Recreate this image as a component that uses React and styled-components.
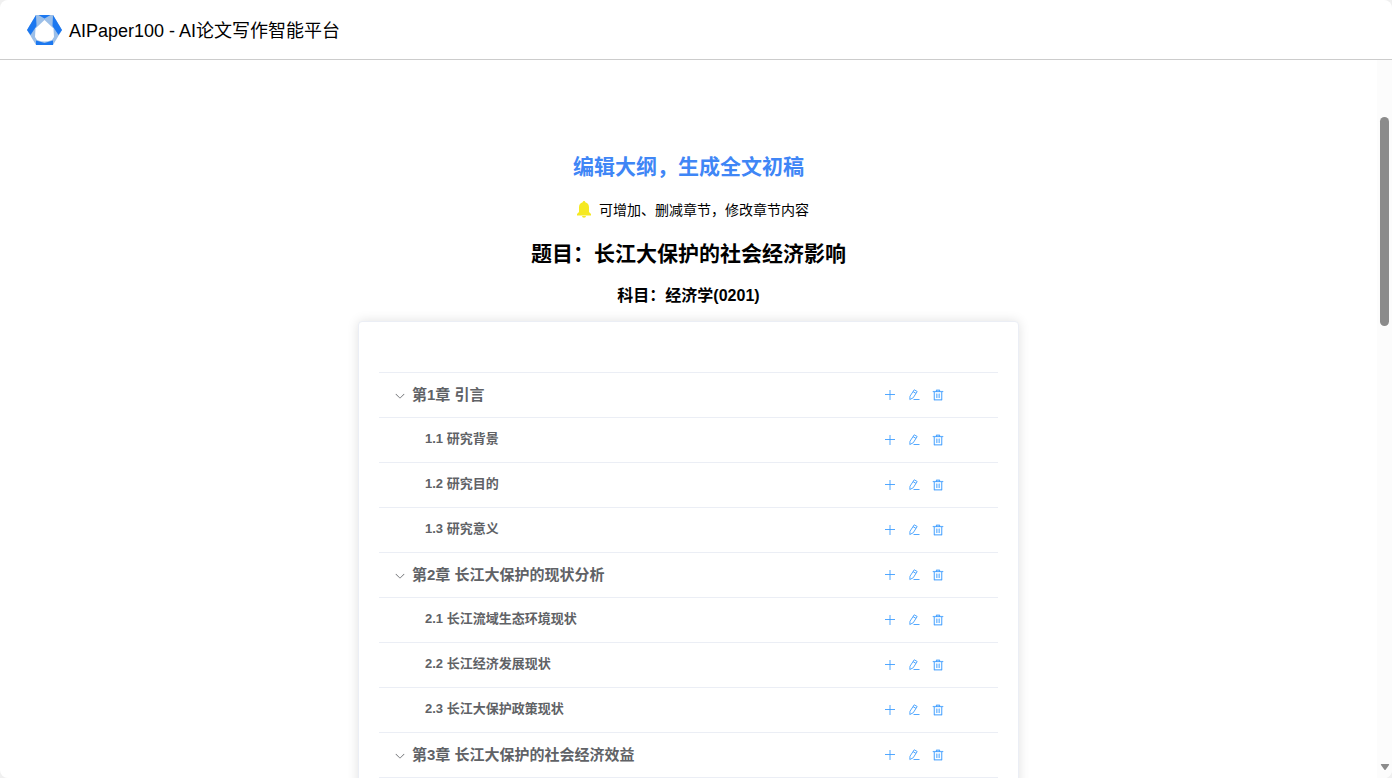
import React, { useState } from "react";
import styled, { createGlobalStyle } from "styled-components";

const outline = [
    {
        name: "第1章 引言",
        sections: ["1.1 研究背景", "1.2 研究目的", "1.3 研究意义"],
    },
    {
        name: "第2章 长江大保护的现状分析",
        sections: ["2.1 长江流域生态环境现状", "2.2 长江经济发展现状", "2.3 长江大保护政策现状"],
    },
    {
        name: "第3章 长江大保护的社会经济效益",
        sections: [],
    },
];

export default function App() {
    const [closed, setClosed] = useState([]);

    function toggleChapter(name) {
        setClosed(closed.includes(name) ? closed.filter((item) => item !== name) : [...closed, name]);
    }

    return (
        <>
            <GlobalStyle />
            <Window>
                <Header>
                    <Logo />
                    <Brand>AIPaper100 - AI论文写作智能平台</Brand>
                </Header>
                <Body>
                    <Content>
                        <PageTitle>编辑大纲，生成全文初稿</PageTitle>
                        <Tip>
                            <BellIcon />
                            可增加、删减章节，修改章节内容
                        </Tip>
                        <PaperTitle>题目：长江大保护的社会经济影响</PaperTitle>
                        <Subject>科目：经济学(0201)</Subject>
                        <Card>
                            <Outline aria-label="大纲">
                                <tbody>
                                    {outline.map((chapter) => (
                                        <React.Fragment key={chapter.name}>
                                            <tr>
                                                <NameCell>
                                                    <ChapterName>
                                                        <IconButton
                                                            $color="#606266"
                                                            aria-label="展开或收起"
                                                            onClick={() => toggleChapter(chapter.name)}
                                                        >
                                                            <ArrowIcon />
                                                        </IconButton>
                                                        {chapter.name}
                                                    </ChapterName>
                                                </NameCell>
                                                <ActionsCell />
                                            </tr>
                                            {!closed.includes(chapter.name) &&
                                                chapter.sections.map((section) => (
                                                    <tr key={section}>
                                                        <NameCell>
                                                            <SectionName>{section}</SectionName>
                                                        </NameCell>
                                                        <ActionsCell />
                                                    </tr>
                                                ))}
                                        </React.Fragment>
                                    ))}
                                </tbody>
                            </Outline>
                        </Card>
                    </Content>
                    <ScrollTrack>
                        <ScrollThumb />
                        <ScrollArrow viewBox="0 0 10 8" aria-hidden="true">
                            <path d="M1.5 1h7a.6.6 0 0 1 .5 1L5.6 6.7a.8.8 0 0 1-1.2 0L1 2a.6.6 0 0 1 .5-1z" fill="#8b8b8b" />
                        </ScrollArrow>
                    </ScrollTrack>
                </Body>
            </Window>
        </>
    );
}

function ActionsCell() {
    return (
        <ButtonsCell>
            <Buttons>
                <IconButton aria-label="增加">
                    <PlusIcon />
                </IconButton>
                <IconButton aria-label="修改">
                    <EditIcon />
                </IconButton>
                <IconButton aria-label="删除">
                    <DeleteIcon />
                </IconButton>
            </Buttons>
        </ButtonsCell>
    );
}

function Logo() {
    return (
        <svg width="36" height="32" viewBox="0 0 36 32" aria-hidden="true">
            <path d="M10 1H27L36 16L27 31H10L1 16Z" fill="#9cbfe8" />
            <path d="M10 1L1 16L4.500 21L10.500 12Z" fill="#1c78f0" />
            <path d="M27 1L36 16L32.500 21L26.500 12Z" fill="#1c78f0" />
            <path d="M12.500 1H24.500L18.500 4.500Z" fill="#1c78f0" />
            <path d="M18.500 6L27.500 14.500L28 23L26 26Q18.500 29 11 26L9 23L9.500 14.500Z" fill="#ffffff" />
            <path d="M10 26.500L18.500 29L27 26.500V31H10Z" fill="#1c78f0" />
        </svg>
    );
}

function BellIcon() {
    return (
        <svg width="16" height="18" viewBox="0 0 16 18" aria-hidden="true">
            <path d="M8 0a1.300 1.300 0 0 1 1.300 1.300C11.700 2 13 3.900 13 6.300V11l2 2V14.500H1V13L3 11V6.300C3 3.900 4.300 2 6.700 1.300A1.300 1.300 0 0 1 8 0zM6 15h4a2 1.700 0 0 1-4 0z" fill="#f5e922" />
        </svg>
    );
}

function ArrowIcon() {
    return (
        <svg width="12" height="12" viewBox="0 -85 1024 1024" fill="currentColor" aria-hidden="true">
            <path d="M831.872 340.864 512 652.672 192.128 340.864a30.592 30.592 0 0 0-42.752 0 29.12 29.12 0 0 0 0 41.6L489.664 714.24a32 32 0 0 0 44.672 0l340.288-331.712a29.12 29.12 0 0 0 0-41.728 30.592 30.592 0 0 0-42.752.064z" />
        </svg>
    );
}

function PlusIcon() {
    return (
        <svg width="12" height="12" viewBox="0 0 12 12" fill="none" stroke="currentColor" aria-hidden="true">
            <path d="M1 5.500H11M6 1V11" strokeWidth="0.900" />
        </svg>
    );
}

function EditIcon() {
    return (
        <svg width="12" height="12" viewBox="0 0 12 12" fill="none" stroke="currentColor" strokeWidth="0.900" aria-hidden="true">
            <path d="M6.200 0.800L9.200 2.500L5.200 8.800L1.800 10.500L2 7.200ZM5 2.600L8 4.400M5.500 10.500H11.500" />
        </svg>
    );
}

function DeleteIcon() {
    return (
        <svg width="12" height="12" viewBox="0 0 1024 1024" fill="currentColor" aria-hidden="true">
            <path d="M160 256H96a32 32 0 0 1 0-64h256V95.936a32 32 0 0 1 32-32h256a32 32 0 0 1 32 32V192h256a32 32 0 1 1 0 64h-64v672a32 32 0 0 1-32 32H192a32 32 0 0 1-32-32V256zm448-64v-64H416v64h192zM224 896h576V256H224v640zm192-128a32 32 0 0 1-32-32V416a32 32 0 0 1 64 0v320a32 32 0 0 1-32 32zm192 0a32 32 0 0 1-32-32V416a32 32 0 0 1 64 0v320a32 32 0 0 1-32 32z" stroke="currentColor" strokeWidth="20" />
        </svg>
    );
}

const GlobalStyle = createGlobalStyle`
    * {
        box-sizing: border-box;
    }

    body {
        margin: 0;
        background-color: #f0f0f0;
        color: #000000;
        font-family: "Liberation Sans", "Noto Sans CJK SC", sans-serif;
    }

    svg {
        display: block;
        flex-shrink: 0;
    }
`;

const Window = styled.div`
    display: flex;
    flex-direction: column;
    height: 100vh;
    overflow: hidden;
    border-radius: 8px;
    background-color: #ffffff;
`;

const Header = styled.header`
    display: flex;
    align-items: center;
    gap: 7px;
    flex-shrink: 0;
    height: 60px;
    padding: 0 26px;
    border-bottom: 1px solid #cccccc;
`;

const Brand = styled.span`
    padding-top: 2px;
    font-size: 18px;
    line-height: 24px;
`;

const Body = styled.div`
    display: flex;
    flex: 1;
    min-height: 0;
`;

const Content = styled.main`
    display: flex;
    flex-direction: column;
    align-items: center;
    flex: 1;
    overflow: hidden;
    padding-top: 92px;
`;

const PageTitle = styled.h1`
    margin: 0;
    color: #3f86f6;
    font-size: 21px;
    line-height: 30px;
`;

const Tip = styled.p`
    display: flex;
    align-items: center;
    gap: 7px;
    margin: 18px 0;
    padding-left: 8px;
    font-size: 14px;
    line-height: 20px;
`;

const PaperTitle = styled.h2`
    margin: 0;
    font-size: 21px;
    line-height: 32px;
`;

const Subject = styled.h3`
    margin: 16px 0 15px;
    font-size: 16px;
    line-height: 20px;
`;

const Card = styled.section`
    flex-shrink: 0;
    width: 48%;
    padding: 50px 20px 20px;
    border: 1px solid #ebeef5;
    border-radius: 4px;
    background-color: #ffffff;
    box-shadow: 0 0 12px rgba(0, 0, 0, 0.12);
`;

const Outline = styled.table`
    width: 100%;
    table-layout: fixed;
    border-spacing: 0;
    border-bottom: 1px solid #ebeef5;
    color: #606266;

    td {
        height: 45px;
        padding: 0;
        border-top: 1px solid #ebeef5;
    }
`;

const NameCell = styled.td`
    font-weight: bold;
`;

const ChapterName = styled.div`
    display: flex;
    align-items: center;
    gap: 6px;
    padding-left: 15px;
    font-size: 15px;
    line-height: 20px;
`;

const SectionName = styled.div`
    padding: 0 0 2px 46px;
    font-size: 13px;
    line-height: 20px;
`;

const ButtonsCell = styled.td`
    width: 114px;
`;

const Buttons = styled.div`
    display: flex;
    gap: 12px;
`;

const IconButton = styled.button`
    padding: 0;
    border: none;
    background: none;
    color: ${(props) => props.$color || "#409eff"};
    cursor: pointer;
`;

const ScrollTrack = styled.div`
    display: flex;
    flex-direction: column;
    align-items: center;
    justify-content: space-between;
    flex-shrink: 0;
    width: 15px;
    padding: 57px 0 7px;
    background-color: #fcfcfc;
`;

const ScrollThumb = styled.div`
    width: 9px;
    height: 32%;
    border-radius: 5px;
    background-color: #8b8b8b;
`;

const ScrollArrow = styled.svg`
    width: 10px;
    height: 8px;
`;
